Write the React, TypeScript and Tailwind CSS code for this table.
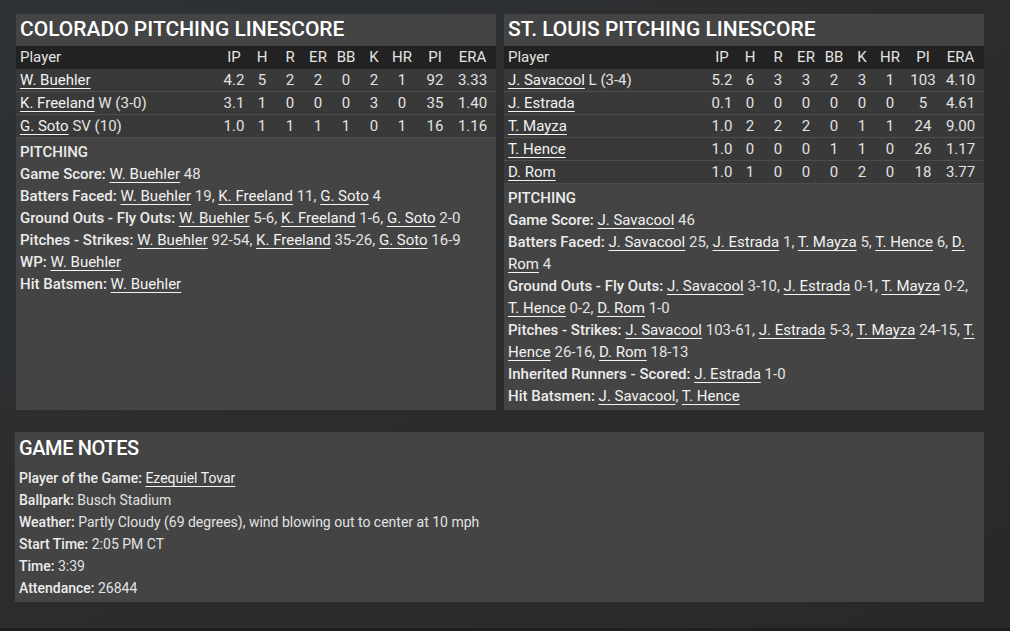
import React from 'react';

type Line = { name: string; note?: string; stats: string[] };

const cols = ['IP', 'H', 'R', 'ER', 'BB', 'K', 'HR', 'PI', 'ERA'];
const widths = ['w-[28px]', 'w-[28px]', 'w-[28px]', 'w-[28px]', 'w-[28px]', 'w-[28px]', 'w-[28px]', 'w-[38px]', 'w-[37px]'];

const colorado: Line[] = [
  { name: 'W. Buehler', stats: ['4.2', '5', '2', '2', '0', '2', '1', '92', '3.33'] },
  { name: 'K. Freeland', note: 'W (3-0)', stats: ['3.1', '1', '0', '0', '0', '3', '0', '35', '1.40'] },
  { name: 'G. Soto', note: 'SV (10)', stats: ['1.0', '1', '1', '1', '1', '0', '1', '16', '1.16'] },
];

const stlouis: Line[] = [
  { name: 'J. Savacool', note: 'L (3-4)', stats: ['5.2', '6', '3', '3', '2', '3', '1', '103', '4.10'] },
  { name: 'J. Estrada', stats: ['0.1', '0', '0', '0', '0', '0', '0', '5', '4.61'] },
  { name: 'T. Mayza', stats: ['1.0', '2', '2', '2', '0', '1', '1', '24', '9.00'] },
  { name: 'T. Hence', stats: ['1.0', '0', '0', '0', '1', '1', '0', '26', '1.17'] },
  { name: 'D. Rom', stats: ['1.0', '1', '0', '0', '0', '2', '0', '18', '3.77'] },
];

function P({ children }: { children: React.ReactNode }) {
  return <span className="underline underline-offset-[3px] decoration-1 text-[#f2f2f2]">{children}</span>;
}

function Label({ children }: { children: React.ReactNode }) {
  return <span className="font-medium text-[#ececec]">{children}</span>;
}

function Linescore({ title, lines, children }: { title: string; lines: Line[]; children: React.ReactNode }) {
  return (
    <div className="flex-1 bg-[#444444] flex flex-col text-[15px]">
      <div className="h-[32px] px-1 flex items-center text-[21px] font-medium text-white">{title}</div>
      <div className="h-[23px] bg-[#222222] flex items-center pl-1 pr-[5px] text-[#e2e2e2]">
        <div className="flex-1">Player</div>
        {cols.map((c, i) => (
          <div key={c} className={`${widths[i]} text-center`}>{c}</div>
        ))}
      </div>
      {lines.map((l) => (
        <div key={l.name} className="h-[23px] bg-[#393939] border-b border-[#4d4d4d] flex items-center pl-1 pr-[5px] text-[#e2e2e2]">
          <div className="flex-1">
            <P>{l.name}</P>
            {l.note && <span> {l.note}</span>}
          </div>
          {l.stats.map((s, i) => (
            <div key={i} className={`${widths[i]} text-center`}>{s}</div>
          ))}
        </div>
      ))}
      <div className="pt-[3px] pb-[3px] pl-1 pr-[6px] leading-[22px] text-[#e2e2e2]">
        <div><Label>PITCHING</Label></div>
        {children}
      </div>
    </div>
  );
}

export default function App() {
  return (
    <div className="h-[631px] w-[1010px] bg-[#1e1e1e] text-[14px] [font-family:Roboto,'Liberation_Sans',sans-serif]">
      <div className="h-[628px] bg-linear-to-br from-[#2e3236] via-[#2b2c2d] to-[#292929] pt-[14px] pl-[16px] pr-[26px]">
        <div className="flex gap-[8px] h-[396px]">
          <Linescore title="COLORADO PITCHING LINESCORE" lines={colorado}>
            <div><Label>Game Score:</Label> <P>W. Buehler</P> 48</div>
            <div><Label>Batters Faced:</Label> <P>W. Buehler</P> 19, <P>K. Freeland</P> 11, <P>G. Soto</P> 4</div>
            <div><Label>Ground Outs - Fly Outs:</Label> <P>W. Buehler</P> 5-6, <P>K. Freeland</P> 1-6, <P>G. Soto</P> 2-0</div>
            <div><Label>Pitches - Strikes:</Label> <P>W. Buehler</P> 92-54, <P>K. Freeland</P> 35-26, <P>G. Soto</P> 16-9</div>
            <div><Label>WP:</Label> <P>W. Buehler</P></div>
            <div><Label>Hit Batsmen:</Label> <P>W. Buehler</P></div>
          </Linescore>
          <Linescore title="ST. LOUIS PITCHING LINESCORE" lines={stlouis}>
            <div><Label>Game Score:</Label> <P>J. Savacool</P> 46</div>
            <div><Label>Batters Faced:</Label> <P>J. Savacool</P> 25, <P>J. Estrada</P> 1, <P>T. Mayza</P> 5, <P>T. Hence</P> 6, <P>D. Rom</P> 4</div>
            <div><Label>Ground Outs - Fly Outs:</Label> <P>J. Savacool</P> 3-10, <P>J. Estrada</P> 0-1, <P>T. Mayza</P> 0-2, <P>T. Hence</P> 0-2, <P>D. Rom</P> 1-0</div>
            <div><Label>Pitches - Strikes:</Label> <P>J. Savacool</P> 103-61, <P>J. Estrada</P> 5-3, <P>T. Mayza</P> 24-15, <P>T. Hence</P> 26-16, <P>D. Rom</P> 18-13</div>
            <div><Label>Inherited Runners - Scored:</Label> <P>J. Estrada</P> 1-0</div>
            <div><Label>Hit Batsmen:</Label> <P>J. Savacool</P>, <P>T. Hence</P></div>
          </Linescore>
        </div>
        <div className="mt-[22px] bg-[#444444] h-[170px] -ml-px px-1 text-[#e2e2e2]">
          <div className="h-[32px] flex items-center text-[20px] font-medium tracking-[-0.4px] text-white">GAME NOTES</div>
          <div className="pt-[3px] leading-[22px]">
            <div><Label>Player of the Game:</Label> <P>Ezequiel Tovar</P></div>
            <div><Label>Ballpark:</Label> Busch Stadium</div>
            <div><Label>Weather:</Label> Partly Cloudy (69 degrees), wind blowing out to center at 10 mph</div>
            <div><Label>Start Time:</Label> 2:05 PM CT</div>
            <div><Label>Time:</Label> 3:39</div>
            <div><Label>Attendance:</Label> 26844</div>
          </div>
        </div>
      </div>
    </div>
  );
}
